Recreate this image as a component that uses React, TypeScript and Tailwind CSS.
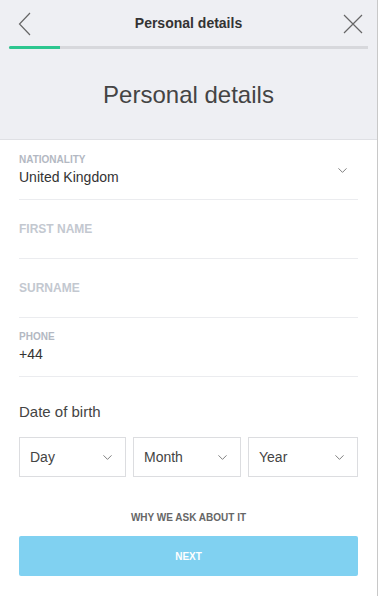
import { ChevronDown } from 'lucide-react';

const font = { fontFamily: '"Liberation Sans", Arial, sans-serif' };

function Field({ label, value, select }: { label: string; value?: string; select?: boolean }) {
  return (
    <div className="relative h-[59px] border-b border-[#ebecef] flex flex-col justify-center">
      {value ? (
        <>
          <div className="text-[10px] font-bold uppercase text-[#b3b8c2] leading-[12px]">{label}</div>
          <div className="text-[14px] text-[#333] leading-[18px] mt-[2px]">{value}</div>
        </>
      ) : (
        <div className="text-[12px] font-bold uppercase text-[#c3c8d0]">{label}</div>
      )}
      {select && (
        <ChevronDown className="absolute right-[8px] top-[22px] w-[15px] h-[15px] text-[#555]" strokeWidth={1.2} />
      )}
    </div>
  );
}

function DateSelect({ label, className }: { label: string; className: string }) {
  return (
    <div className={`h-[40px] border border-[#dcdde0] flex items-center justify-between pl-[10px] pr-[10px] ${className}`}>
      <span className="text-[14px] text-[#444]">{label}</span>
      <ChevronDown className="w-[15px] h-[15px] text-[#555]" strokeWidth={1.2} />
    </div>
  );
}

export default function App() {
  return (
    <div className="w-[380px] h-[596px] bg-white" style={font}>
      <div className="w-[378px] h-[596px] border-r border-[#c8c8c8] bg-white">
        {/* header */}
        <div className="bg-[#eeeff3] h-[140px] border-b border-[#dfe0e4]">
          <div className="relative h-[46px] flex items-center justify-center">
            <svg className="absolute left-[18px] top-[12px]" width="13" height="24" viewBox="0 0 13 24">
              <path d="M12 1 L1.5 12 L12 23" fill="none" stroke="#666" strokeWidth="1.2" />
            </svg>
            <span className="text-[14px] font-bold text-[#333] mt-[1px]">Personal details</span>
            <svg className="absolute left-[343px] top-[14px]" width="20" height="20" viewBox="0 0 20 20">
              <path d="M1 1 L19 19 M19 1 L1 19" fill="none" stroke="#666" strokeWidth="1.2" />
            </svg>
          </div>
          <div className="mx-[9px] h-[3px] bg-[#d7d8dc] flex">
            <div className="w-[51px] h-[3px] bg-[#2dc68f] rounded-l-full" />
          </div>
          <div className="text-center text-[24px] text-[#444] mt-[28px]">Personal details</div>
        </div>

        {/* form */}
        <div className="px-[19px] pt-[1px]">
          <Field label="Nationality" value="United Kingdom" select />
          <Field label="First name" />
          <Field label="Surname" />
          <Field label="Phone" value="+44" />

          <div className="text-[15px] text-[#444] mt-[26px] leading-[18px]">Date of birth</div>
          <div className="flex gap-[7px] mt-[16px]">
            <DateSelect label="Day" className="w-[107px]" />
            <DateSelect label="Month" className="w-[108px]" />
            <DateSelect label="Year" className="flex-1" />
          </div>

          <div className="text-center text-[10px] font-bold text-[#666] mt-[33px]">WHY WE ASK ABOUT IT</div>
          <button className="w-full h-[40px] mt-[11px] bg-[#80d1f1] rounded-[2px] text-white text-[10px] font-bold">
            NEXT
          </button>
        </div>
      </div>
    </div>
  );
}
